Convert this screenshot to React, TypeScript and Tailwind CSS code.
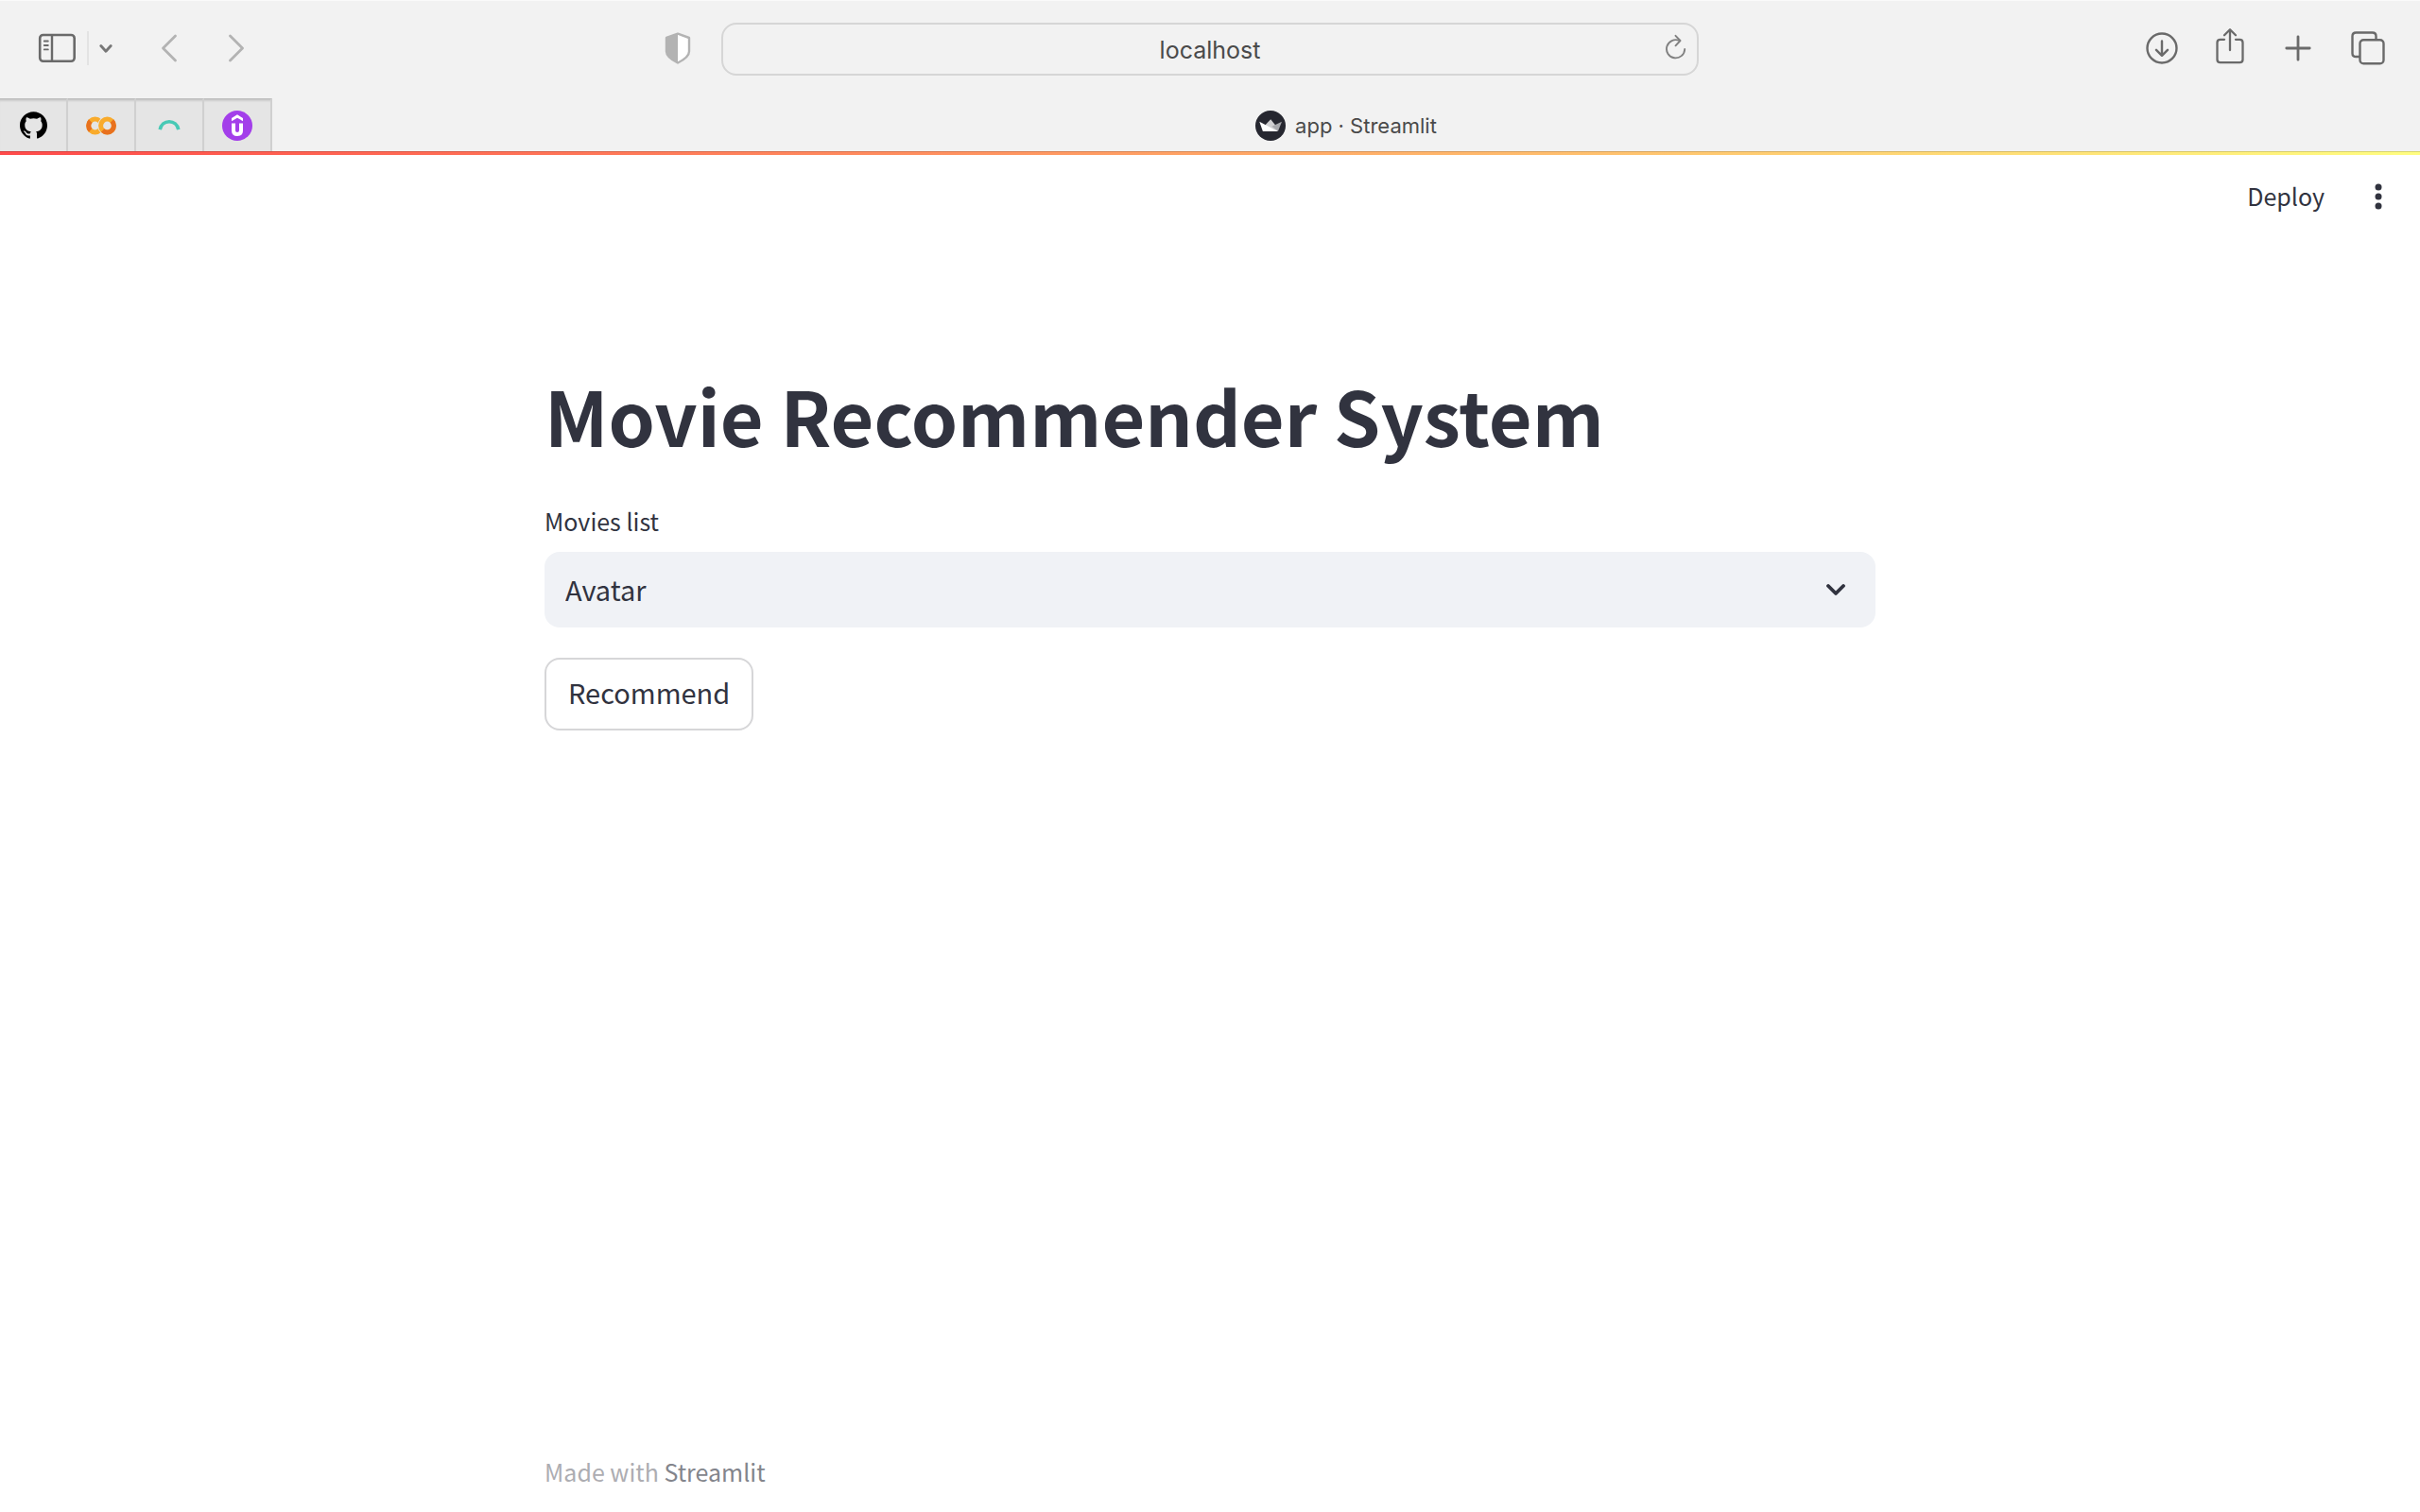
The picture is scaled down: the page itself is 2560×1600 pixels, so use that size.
import { useState } from 'react'

const SANS = "font-['Noto_Sans_CJK_SC',sans-serif]"

function SidebarIcon() {
  return (
    <svg width="40" height="32" viewBox="0 0 40 32" fill="none" stroke="#6a6a6a" strokeLinecap="round">
      <rect x="2.200" y="2" width="36.500" height="27.800" rx="3.500" strokeWidth="2.600" />
      <path d="M15 3v26" strokeWidth="2.400" />
      <path d="M6.800 8.500h4M6.800 13h4M6.800 17.400h4" strokeWidth="1.900" />
    </svg>
  )
}

function MenuChevron() {
  return (
    <svg width="14" height="12" viewBox="0 0 14 12" fill="none" stroke="#777" strokeWidth="2.800" strokeLinecap="round" strokeLinejoin="round">
      <path d="M1.800 3.500 7 9.300 12.200 3.500" />
    </svg>
  )
}

function Chevron({ forward = false }: { forward?: boolean }) {
  return (
    <svg width="18" height="30" viewBox="0 0 18 30" fill="none" stroke="#b3b3b3" strokeWidth="2.800" strokeLinecap="round" strokeLinejoin="round">
      <path d={forward ? 'M2.500 2 15.500 15 2.500 28' : 'M15.500 2 2.500 15 15.500 28'} />
    </svg>
  )
}

function ShieldIcon() {
  return (
    <svg width="28" height="34" viewBox="0 0 28 34">
      <path d="M14 1.600 26 6v14.500c0 4.600-5 8.500-12 12C7 29 2 25.100 2 20.500V6Z" fill="#fff" stroke="#b3b3b3" strokeWidth="2.400" strokeLinejoin="round" />
      <path d="M14 1.600V32.500C7 29 2 25.100 2 20.500V6Z" fill="#b3b3b3" />
    </svg>
  )
}

function ReloadIcon() {
  return (
    <svg width="24" height="28" viewBox="0 0 24 28" fill="none" stroke="#808080" strokeWidth="1.900" strokeLinecap="round" strokeLinejoin="round">
      <path d="M21.200 16A9.600 9.600 0 1 1 15.500 7" />
      <path d="M11.500 1.800 16.500 7l-5 5.300" />
    </svg>
  )
}

function DownloadIcon() {
  return (
    <svg width="34" height="34" viewBox="0 0 34 34" fill="none" stroke="#6a6a6a" strokeWidth="2.400" strokeLinecap="round" strokeLinejoin="round">
      <circle cx="17" cy="17" r="15.500" />
      <path d="M17 9.500V24.500M11 18.800l6 6 6-6" />
    </svg>
  )
}

function ShareIcon() {
  return (
    <svg width="30" height="40" viewBox="0 0 30 40" fill="none" stroke="#6a6a6a" strokeWidth="2.300" strokeLinecap="round" strokeLinejoin="round">
      <path d="M9 12.800H4.800C2.600 12.800 1.500 14 1.500 16v18c0 2 1.100 3.200 3.300 3.200h20.400c2.200 0 3.300-1.200 3.300-3.200V16c0-2-1.100-3.200-3.300-3.200H21" />
      <path d="M15 24V2.500M9 8.200l6-6 6 6" />
    </svg>
  )
}

function PlusIcon() {
  return (
    <svg width="28" height="28" viewBox="0 0 28 28" fill="none" stroke="#6a6a6a" strokeWidth="2.800" strokeLinecap="round">
      <path d="M14 1.800v24.400M1.800 14h24.400" />
    </svg>
  )
}

function TabsIcon() {
  return (
    <svg width="36" height="36" viewBox="0 0 36 36" fill="none" stroke="#6a6a6a" strokeWidth="2.400" strokeLinejoin="round">
      <rect x="9.500" y="9.300" width="25" height="25" rx="3.800" />
      <path d="M9.500 27H5.300c-2.500 0-3.800-1.200-3.800-3.600V5.300c0-2.500 1.300-3.800 3.800-3.800h17.400c2.500 0 3.800 1.300 3.800 3.800v4" />
    </svg>
  )
}

function GitHubLogo() {
  return (
    <svg width="29" height="29" viewBox="0 0 24 24" fill="#000">
      <path d="M12 .297c-6.630 0-12 5.373-12 12 0 5.303 3.438 9.800 8.205 11.385.6.113.82-.258.82-.577 0-.285-.01-1.040-.015-2.040-3.338.724-4.042-1.610-4.042-1.610C4.422 18.070 3.633 17.700 3.633 17.700c-1.087-.744.084-.729.084-.729 1.205.084 1.838 1.236 1.838 1.236 1.070 1.835 2.809 1.305 3.495.998.108-.776.417-1.305.76-1.605-2.665-.3-5.466-1.332-5.466-5.930 0-1.310.465-2.380 1.235-3.220-.135-.303-.54-1.523.105-3.176 0 0 1.005-.322 3.300 1.230.96-.267 1.980-.399 3-.405 1.020.006 2.040.138 3 .405 2.280-1.552 3.285-1.230 3.285-1.230.645 1.653.24 2.873.12 3.176.765.84 1.230 1.910 1.230 3.220 0 4.610-2.805 5.625-5.475 5.920.42.36.81 1.096.81 2.220 0 1.606-.015 2.896-.015 3.286 0 .315.21.69.825.57C20.565 22.092 24 17.592 24 12.297c0-6.627-5.373-12-12-12" />
    </svg>
  )
}

function ColabLogo() {
  return (
    <svg width="32" height="20" viewBox="0 0 32 20" fill="none" strokeWidth="5">
      <circle cx="9.600" cy="10" r="6.900" stroke="#f9ab2b" />
      <path d="M4.700 5.100A6.900 6.900 0 0 0 4.700 14.900" stroke="#e8711f" />
      <circle cx="22.500" cy="10" r="10.300" fill="#e5e5e5" />
      <circle cx="22.500" cy="10" r="6.900" stroke="#f9ab2b" />
      <path d="M27.400 5.100A6.900 6.900 0 1 1 17.600 14.900" stroke="#e8711f" />
    </svg>
  )
}

function ArcLogo() {
  return (
    <svg width="24" height="14" viewBox="0 0 24 14" fill="none" stroke="#47c9b5" strokeWidth="3.600">
      <path d="M2.200 11.200C3.300 5.800 7.200 2.800 12 2.800s8.700 3 9.800 8.400" />
    </svg>
  )
}

function UdemyLogo() {
  return (
    <svg width="32" height="32" viewBox="0 0 32 32">
      <circle cx="16" cy="16" r="16" fill="#a33eea" />
      <path d="M10 8 16 4.300 22 8v3.200l-6-3.500-6 3.500Z" fill="#fff" />
      <path d="M12 13.500v7.500c0 2.700 1.500 4 4 4s4-1.300 4-4v-7.500" fill="none" stroke="#fff" strokeWidth="4" />
    </svg>
  )
}

function StreamlitLogo() {
  return (
    <svg width="32" height="32" viewBox="0 0 32 32">
      <circle cx="16" cy="16" r="16" fill="#262730" />
      <path d="M10.500 15.200 16.200 9.300 21.200 15.400 23.700 22H12Z" fill="#d0d0d2" />
      <path d="M28 11.700 17.500 16.800 24 21.800Z" fill="#a8a9ad" />
      <path d="M4.300 11.700 23.700 22H7.900Z" fill="#fff" />
    </svg>
  )
}

const pinned = [
  { name: 'GitHub', icon: <GitHubLogo /> },
  { name: 'Colab', icon: <ColabLogo /> },
  { name: 'Learning', icon: <ArcLogo /> },
  { name: 'Udemy', icon: <UdemyLogo /> },
]

function BrowserChrome() {
  return (
    <header className="border-t border-[#fafafa] bg-[#f2f2f2] font-[Inter,sans-serif]">
      <div className="grid h-[103px] grid-cols-[minmax(0,1fr)_minmax(0,1034px)_minmax(0,1fr)] items-center pb-px">
        <div className="flex items-center pr-8 pb-0.5 pl-10">
          <button type="button" aria-label="Show sidebar"><SidebarIcon /></button>
          <span className="ml-3 h-9 w-0.5 bg-[#e3e3e3]" />
          <button type="button" aria-label="Sidebar menu" className="ml-[11px]"><MenuChevron /></button>
          <button type="button" aria-label="Back" className="ml-[51px]"><Chevron /></button>
          <button type="button" aria-label="Forward" className="ml-[53px]"><Chevron forward /></button>
          <button type="button" aria-label="Privacy report" className="ml-auto"><ShieldIcon /></button>
        </div>
        <div className="relative">
          <input
            aria-label="Address"
            defaultValue="localhost"
            className="block h-14 w-full rounded-2xl border-2 border-[#d6d6d6] bg-[#f2f2f2] px-12 pt-0.5 text-center text-[25px] text-[#4a4a4a] outline-none"
          />
          <button type="button" aria-label="Reload" className="absolute top-3 right-3"><ReloadIcon /></button>
        </div>
        <div className="flex items-center justify-end pr-[37px] pb-0.5">
          <button type="button" aria-label="Downloads" className="mr-10"><DownloadIcon /></button>
          <button type="button" aria-label="Share" className="mr-[43px] pb-1"><ShareIcon /></button>
          <button type="button" aria-label="New tab" className="mr-[42px]"><PlusIcon /></button>
          <button type="button" aria-label="Tab overview"><TabsIcon /></button>
        </div>
      </div>
      <nav aria-label="Tabs" className="flex h-14">
        {pinned.map((tab) => (
          <button
            key={tab.name}
            type="button"
            aria-label={tab.name}
            className="flex w-[72px] items-center justify-center border-t border-r-2 border-t-[#bebebe] border-r-[#d0d0d0] bg-[#e5e5e5] shadow-[inset_0_3px_3px_-2px_rgba(0,0,0,0.2)]"
          >
            {tab.icon}
          </button>
        ))}
        <button type="button" className="flex flex-1 items-center justify-center gap-2.5 pt-0.5 text-[22px] text-[#4a4a4a]">
          <StreamlitLogo />
          <span>app · Streamlit</span>
        </button>
      </nav>
    </header>
  )
}

export default function App() {
  const [movie, setMovie] = useState('Avatar')
  return (
    <div className={`flex min-h-screen flex-col bg-white text-[#31333f] ${SANS}`}>
      <BrowserChrome />
      <div className="h-1 border-t border-black/15 bg-linear-to-r/srgb from-[#ff4b4b] to-[#fffd80]" />
      <div className="flex h-[86px] items-center justify-end pr-10">
        <button type="button" className="text-[25px] leading-10">Deploy</button>
        <button type="button" aria-label="Main menu" className="ml-[53px]">
          <svg width="8" height="30" viewBox="0 0 8 30" fill="#31333f">
            <circle cx="4" cy="6" r="3.500" />
            <circle cx="4" cy="16" r="3.500" />
            <circle cx="4" cy="26" r="3.500" />
          </svg>
        </button>
      </div>
      <main className="mx-auto flex w-full max-w-[1408px] flex-1 flex-col items-start pt-[141px]">
        <h1 className="text-[79px] leading-24 font-bold">Movie Recommender System</h1>
        <label htmlFor="movie" className="mt-11 text-[25px] leading-10">Movies list</label>
        <div className="relative mt-[13px] w-full">
          <select
            id="movie"
            value={movie}
            onChange={(e) => setMovie(e.target.value)}
            className="h-20 w-full appearance-none rounded-2xl bg-[#f0f2f6] px-[22px] text-[29px] outline-none"
          >
            <option>Avatar</option>
          </select>
          <svg className="pointer-events-none absolute top-[30px] right-8" width="20" height="20" viewBox="0 0 20 20" fill="none" stroke="#31333f" strokeWidth="3.800" strokeLinecap="round" strokeLinejoin="round">
            <path d="M2 6l8 8 8-8" />
          </svg>
        </div>
        <button type="button" className="mt-8 h-[77px] rounded-2xl border-2 border-[#d6d6d8] px-[23px] pb-1 text-[29px]">
          Recommend
        </button>
      </main>
      <footer className="mx-auto w-full max-w-[1408px] pb-[23px] text-[25px] leading-10 text-[#adadb2]">
        Made with <a href="#streamlit" className="text-[#83858c]">Streamlit</a>
      </footer>
    </div>
  )
}
